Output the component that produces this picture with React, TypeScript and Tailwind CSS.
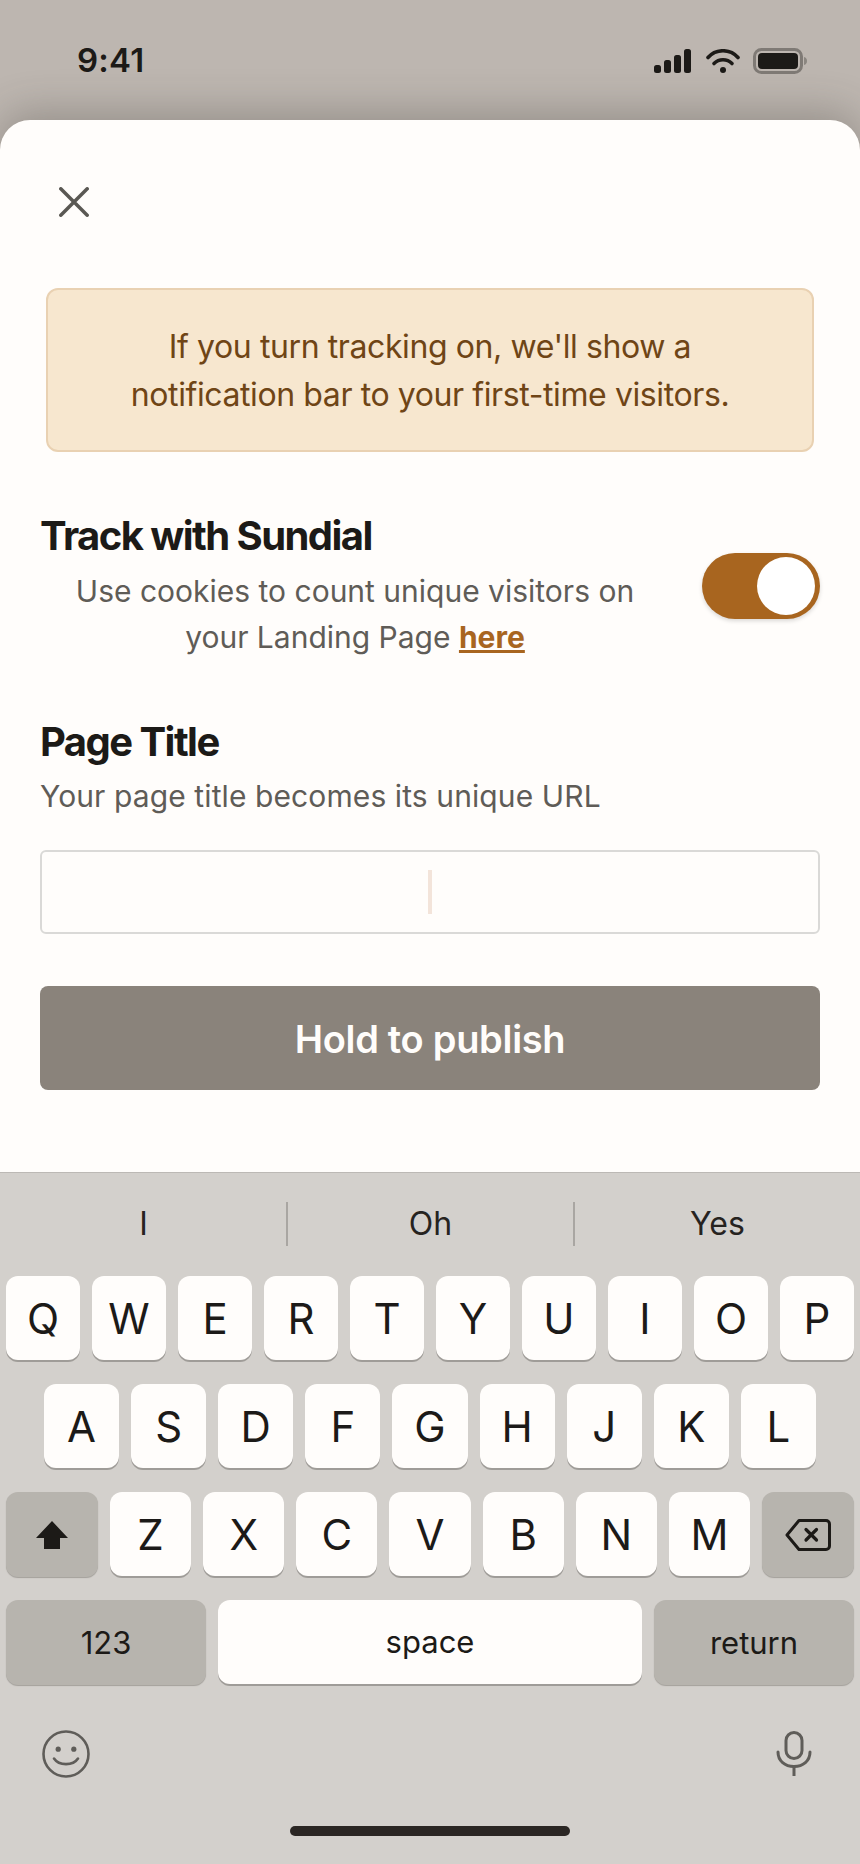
const font = { fontFamily: "Inter, 'Noto Sans', sans-serif" };

const topRow = ["Q", "W", "E", "R", "T", "Y", "U", "I", "O", "P"];
const midRow = ["A", "S", "D", "F", "G", "H", "J", "K", "L"];
const lowRow = ["Z", "X", "C", "V", "B", "N", "M"];

function LetterKey({ label }: { label: string }) {
  return (
    <div className="flex h-[84px] flex-1 items-center justify-center rounded-[12px] bg-[#fffdfb] text-[42px] text-[#1c1a18] shadow-[0_2px_0_#9f9c98]">
      {label}
    </div>
  );
}

function StatusIcons() {
  return (
    <div className="flex items-center">
      <svg width="37" height="24" viewBox="0 0 37 24" fill="#1c1a17">
        <rect x="0" y="16" width="7" height="8" rx="2.5" />
        <rect x="10" y="11" width="7" height="13" rx="2.5" />
        <rect x="20" y="6" width="7" height="18" rx="2.5" />
        <rect x="30" y="0" width="7" height="24" rx="2.5" />
      </svg>
      <svg className="ml-[15px]" width="34" height="24" viewBox="0 0 34 24" fill="none" stroke="#1c1a17" strokeWidth="3.6" strokeLinecap="round">
        <path d="M2 8.5C10-.5 24-.5 32 8.5" />
        <path d="M8 14.5C13 9.5 21 9.5 26 14.5" />
        <circle cx="17" cy="21" r="3" fill="#1c1a17" stroke="none" />
      </svg>
      <svg className="ml-[13px]" width="55" height="26" viewBox="0 0 55 26" fill="none">
        <rect x="1.5" y="1.5" width="47" height="23" rx="7" stroke="#7f7a75" strokeWidth="3" />
        <rect x="5" y="5" width="40" height="16" rx="4" fill="#1c1a17" />
        <path d="M51 9c2 .6 3 2 3 4s-1 3.400-3 4z" fill="#8b8680" />
      </svg>
    </div>
  );
}

export default function App() {
  return (
    <div className="flex h-[1864px] w-[860px] flex-col overflow-hidden bg-[#bdb6b0]" style={font}>
      <div className="flex h-[120px] shrink-0 items-start justify-between pl-[77px] pr-[52px] pt-[41px]">
        <span className="text-[33px] font-semibold leading-[38px] tracking-[0.2px] text-[#1c1a17]">9:41</span>
        <div className="pt-[7px]">
          <StatusIcons />
        </div>
      </div>

      <div className="flex-1 rounded-t-[30px] bg-[#fffdfb] shadow-[0_-8px_40px_rgba(60,55,50,0.3)]">
        <div className="pl-[59px] pt-[67px]">
          <svg className="block" width="30" height="30" viewBox="0 0 30 30" fill="none" stroke="#5a5853" strokeWidth="3.500" strokeLinecap="round">
            <path d="M1.800 1.800 28.200 28.200M28.200 1.800 1.800 28.200" />
          </svg>
        </div>

        <div className="mx-[46px] mt-[71px] flex h-[164px] flex-col items-center justify-center rounded-[12px] border-2 border-[#e9d1b2] bg-[#f7e7cf] pt-[1px] text-center text-[32px] leading-[48px] tracking-[-0.4px] text-[#6f4516]">
          <p>If you turn tracking on, we'll show a</p>
          <p>notification bar to your first-time visitors.</p>
        </div>

        <div className="mt-[59px] flex items-center justify-between px-[40px]">
          <div className="w-[630px]">
            <h2 className="text-[40px] font-bold leading-[50px] tracking-[-1.55px] text-[#1c1a17]">Track with Sundial</h2>
            <p className="mt-[7px] text-center text-[30px] leading-[46px] text-[#5f5c57]">
              Use cookies to count unique visitors on
              <br />
              your Landing Page <a className="font-bold text-[#a8651f] underline">here</a>
            </p>
          </div>
          <div className="flex h-[66px] w-[118px] items-center justify-end rounded-full bg-[#a8651f] pr-[5px] shadow-[0_2px_4px_rgba(0,0,0,0.15)]">
            <div className="h-[58px] w-[58px] rounded-full bg-white" />
          </div>
        </div>

        <div className="mt-[57px] px-[40px]">
          <h2 className="text-[40px] font-bold leading-[50px] tracking-[-1.55px] text-[#1c1a17]">Page Title</h2>
          <p className="mt-[6px] text-[30px] leading-[46px] tracking-[0.1px] text-[#5f5c57]">Your page title becomes its unique URL</p>
          <div className="mt-[31px] flex h-[84px] items-center justify-center rounded-[6px] border-2 border-[#dad9d7]">
            <div className="h-[44px] w-[4px] bg-[#f3e4da]" />
          </div>
          <button className="mt-[52px] flex h-[104px] w-full items-center justify-center rounded-[8px] bg-[#8a837b] pt-[3px] text-[38px] font-semibold tracking-[-0.3px] text-[#fffdfb]">
            Hold to publish
          </button>
        </div>
      </div>

      <div className="h-[692px] shrink-0 border-t border-[#bcb9b5] bg-[#d3d0cc]">
        <div className="flex h-[103px] items-start pl-[1px] pt-[29px] text-[32px] text-[#26231f]">
          <div className="flex h-[44px] flex-1 items-center justify-center border-r-2 border-[#a9a6a2]">I</div>
          <div className="flex h-[44px] flex-1 items-center justify-center border-r-2 border-[#a9a6a2]">Oh</div>
          <div className="flex h-[44px] flex-1 items-center justify-center">Yes</div>
        </div>

        <div className="flex flex-col gap-[24px]">
          <div className="flex gap-[12px] px-[6px]">
            {topRow.map((k) => (
              <LetterKey key={k} label={k} />
            ))}
          </div>
          <div className="flex gap-[12px] px-[44px]">
            {midRow.map((k) => (
              <LetterKey key={k} label={k} />
            ))}
          </div>
          <div className="flex h-[84px] items-start gap-[12px] px-[6px]">
            <div className="flex h-[85px] w-[92px] items-center justify-center rounded-[12px] bg-[#b7b4ae] shadow-[0_1px_1px_#a3a09b]">
              <svg width="32" height="28" viewBox="0 0 32 28" fill="#1c1a17">
                <path d="M16 0 32 17H24V28H8V17H0Z" />
              </svg>
            </div>
            {lowRow.map((k) => (
              <LetterKey key={k} label={k} />
            ))}
            <div className="flex h-[85px] w-[92px] items-center justify-center rounded-[12px] bg-[#b7b4ae] shadow-[0_1px_1px_#a3a09b]">
              <svg width="46" height="32" viewBox="0 0 46 32" fill="none" stroke="#1c1a17" strokeWidth="3" strokeLinecap="round" strokeLinejoin="round">
                <path d="M14 1.500H41a3.500 3.500 0 0 1 3.500 3.500V27a3.500 3.500 0 0 1-3.500 3.500H14L2 16Z" />
                <path d="M21 10.500 31.500 21M31.500 10.500 21 21" strokeWidth="3.200" />
              </svg>
            </div>
          </div>
          <div className="flex h-[84px] items-start gap-[12px] px-[6px] text-[31px] text-[#1c1a17]">
            <div className="flex h-[85px] w-[200px] items-center justify-center rounded-[12px] bg-[#b7b4ae] pt-[1px] shadow-[0_1px_1px_#a3a09b]">123</div>
            <div className="flex h-[84px] flex-1 items-center justify-center rounded-[12px] bg-[#fffdfb] pt-[1px] shadow-[0_2px_0_#9f9c98]">space</div>
            <div className="flex h-[85px] w-[200px] items-center justify-center rounded-[12px] bg-[#b7b4ae] pt-[1px] shadow-[0_1px_1px_#a3a09b]">return</div>
          </div>
        </div>

        <div className="flex items-center justify-between pl-[42px] pr-[48px] pt-[46px]">
          <svg width="48" height="48" viewBox="0 0 48 48" fill="none" stroke="#5f5d59" strokeWidth="2.600" strokeLinecap="round">
            <circle cx="24" cy="24" r="22.500" />
            <circle cx="16.200" cy="19.200" r="2.600" fill="#5f5d59" stroke="none" />
            <circle cx="31.800" cy="19.200" r="2.600" fill="#5f5d59" stroke="none" />
            <path d="M12 28.500C17 36 31 36 36 28.500" />
          </svg>
          <svg width="36" height="46" viewBox="0 0 36 46" fill="none" stroke="#5f5d59" strokeWidth="3">
            <rect x="10" y="1.500" width="16" height="26" rx="8" />
            <path d="M2 21C2 30 9 35.500 18 35.500S34 30 34 21" strokeLinecap="round" />
            <path d="M18 35.500V45" />
          </svg>
        </div>

        <div className="mt-[48px] flex justify-center">
          <div className="h-[10px] w-[280px] rounded-full bg-[#2a2623]" />
        </div>
      </div>
    </div>
  );
}
